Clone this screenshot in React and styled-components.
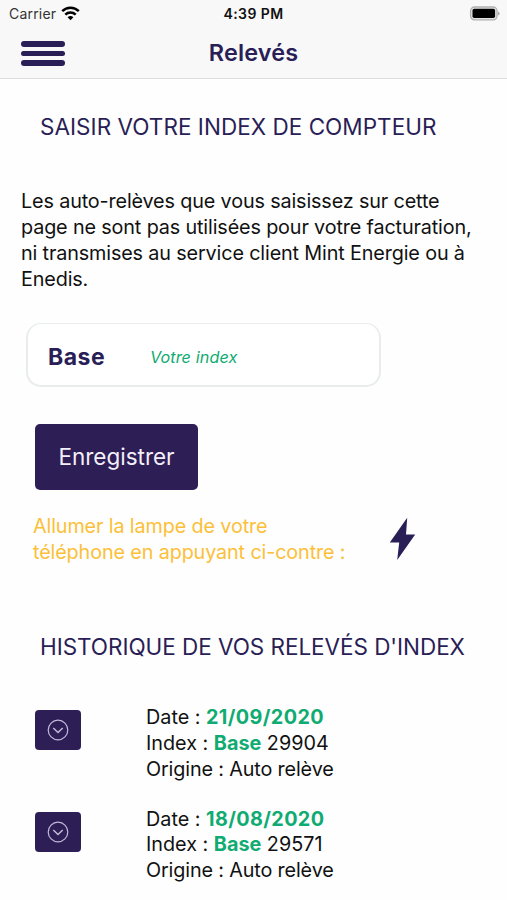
import React from 'react'
import styled, { createGlobalStyle } from 'styled-components'

const GlobalStyle = createGlobalStyle`
    * {
        box-sizing: border-box;
    }

    body {
        margin: 0;
        background: #fefefe;
        color: #111;
        font-family: Inter, "Liberation Sans", sans-serif;
    }
`

const Screen = styled.div`
    width: 507px;
    height: 900px;
    overflow: hidden;
`

const Header = styled.header`
    height: 79px;
    background: #f8f8f8;
    border-bottom: 1px solid #dcdcdc;
`

const StatusBar = styled.div`
    height: 27px;
    padding: 0 7px 0 9px;
    display: grid;
    grid-template-columns: 1fr auto 1fr;
    align-items: center;
    font-size: 14px;
    line-height: 27px;
`

const Carrier = styled.div`
    display: flex;
    align-items: center;
    gap: 5px;
    letter-spacing: 0.2px;
    color: #333;
`

const Clock = styled.div`
    margin-right: 2px;
    font-weight: 600;
    letter-spacing: 0.4px;
    color: #111;
`

const Battery = styled.svg`
    justify-self: end;
`

const NavBar = styled.div`
    height: 51px;
    padding: 0 21px;
    display: grid;
    grid-template-columns: 1fr auto 1fr;
    align-items: center;
`

const MenuButton = styled.button`
    width: 44px;
    margin-top: 2px;
    padding: 0;
    border: 0;
    background: none;
    display: flex;
    flex-direction: column;
    gap: 4px;
`

const MenuBar = styled.span`
    height: 5.7px;
    border-radius: 3px;
    background: #2a1e57;
`

const PageTitle = styled.h1`
    margin: 0;
    font-size: 23.4px;
    font-weight: 600;
    line-height: 50px;
    letter-spacing: 0.15px;
    color: #2a1e57;
`

const SectionTitle = styled.h2`
    margin: 0 0 0 40px;
    font-size: 22.5px;
    font-weight: 400;
    line-height: 30px;
    letter-spacing: ${(props) => props.$spacing}px;
    color: #2a1e57;
    white-space: nowrap;
`

const Entry = styled.section`
    padding-top: 33px;
`

const Notice = styled.p`
    margin: 47.4px 0 0 21px;
    font-size: 19.8px;
    line-height: 25.7px;
    letter-spacing: -0.14px;
    white-space: nowrap;
`

const IndexField = styled.label`
    width: 355px;
    height: 64px;
    margin: 30.6px 0 0 26px;
    padding: 6px 0 0 20px;
    display: flex;
    align-items: center;
    border: 2px solid #e8eced;
    border-top-width: 1px;
    border-radius: 15px;
    background: #fff;
`

const FieldName = styled.span`
    width: 102px;
    font-size: 23px;
    font-weight: 700;
    letter-spacing: 0.5px;
    color: #2a1e57;
`

const FieldInput = styled.input`
    width: 200px;
    padding: 0;
    border: 0;
    outline: 0;
    background: none;
    font-family: inherit;
    font-size: 16.2px;
    font-style: italic;
    letter-spacing: 0.1px;

    &::placeholder {
        color: #10ab72;
        opacity: 1;
    }
`

const SaveButton = styled.button`
    display: block;
    width: 163px;
    height: 66px;
    margin: 37px 0 0 35px;
    padding: 0;
    border: 0;
    border-radius: 5px;
    background: #2d1f55;
    color: #f3effa;
    font-family: inherit;
    font-size: 22.5px;
`

const Torch = styled.div`
    margin: 24px 0 0 33px;
    display: flex;
    align-items: flex-start;
`

const TorchText = styled.p`
    width: 356px;
    margin: 0;
    font-size: 19.8px;
    line-height: 25.7px;
    letter-spacing: -0.13px;
    white-space: nowrap;
    color: #fcc038;
`

const Bolt = styled.svg`
    margin-top: 3px;
`

const History = styled.section`
    padding-top: 67px;
`

const Rows = styled.div`
    margin: 43px 0 0 35px;
    display: flex;
    flex-direction: column;
    gap: 24.2px;
`

const Row = styled.div`
    display: flex;
    align-items: flex-start;
`

const ExpandButton = styled.button`
    width: 46px;
    height: 40px;
    margin: 5px 65px 0 0;
    padding: 0;
    border: 0;
    border-radius: 4px;
    background: #2d1f55;
    display: flex;
    align-items: center;
    justify-content: center;
`

const Details = styled.div`
    font-size: 19.8px;
    line-height: 25.7px;
    white-space: nowrap;
`

const Origin = styled.div`
    letter-spacing: -0.14px;
`

const Value = styled.b`
    font-weight: 700;
    letter-spacing: ${(props) => props.$spacing || 0}px;
    color: #10ab72;
`

const releves = [
    { date: '21/09/2020', index: '29904', origine: 'Auto relève' },
    { date: '18/08/2020', index: '29571', origine: 'Auto relève' },
]

function App() {
    return (
        <Screen>
            <GlobalStyle />
            <Header>
                <StatusBar>
                    <Carrier>
                        Carrier
                        <svg width="19" height="15" viewBox="0 0 19 15" fill="none" stroke="#000" strokeWidth="2.5">
                            <path d="M1.2 5.2C5.9.5 13.1.5 17.8 5.2" />
                            <path d="M4.3 8.6c2.9-2.8 7.5-2.8 10.4 0" />
                            <path d="M9.5 14.2 6.6 11.2c1.7-1.5 4.1-1.5 5.8 0z" fill="#000" stroke="none" />
                        </svg>
                    </Carrier>
                    <Clock>4:39 PM</Clock>
                    <Battery width="31" height="15" viewBox="0 0 31 15">
                        <rect x="1.6" y="1" width="26.4" height="12.8" rx="3.8" fill="#e4e4e4" stroke="#b0b0b0" strokeWidth="1.3" />
                        <rect x="3.5" y="2.8" width="22.6" height="9.2" rx="1.8" fill="#000" />
                        <path d="M28.8 5.2c2.4.8 2.4 3.7 0 4.5z" fill="#aaa" />
                    </Battery>
                </StatusBar>
                <NavBar>
                    <MenuButton aria-label="Menu">
                        <MenuBar />
                        <MenuBar />
                        <MenuBar />
                    </MenuButton>
                    <PageTitle>Relevés</PageTitle>
                </NavBar>
            </Header>

            <Entry>
                <SectionTitle $spacing={0.03}>SAISIR VOTRE INDEX DE COMPTEUR</SectionTitle>
                <Notice>
                    Les auto-relèves que vous saisissez sur cette<br />
                    page ne sont pas utilisées pour votre facturation,<br />
                    ni transmises au service client Mint Energie ou à<br />
                    Enedis.
                </Notice>
                <IndexField>
                    <FieldName>Base</FieldName>
                    <FieldInput type="text" placeholder="Votre index" />
                </IndexField>
                <SaveButton>Enregistrer</SaveButton>
                <Torch>
                    <TorchText>
                        Allumer la lampe de votre<br />
                        téléphone en appuyant ci-contre :
                    </TorchText>
                    <Bolt width="27" height="44" viewBox="0 0 27 44">
                        <path d="M18.2.8 17 17.4H26.2L8.2 43 10.2 25.6H.8z" fill="#2a1e57" />
                    </Bolt>
                </Torch>
            </Entry>

            <History>
                <SectionTitle $spacing={-0.05}>HISTORIQUE DE VOS RELEVÉS D'INDEX</SectionTitle>
                <Rows>
                    { releves.map((item) =>
                        <Row key={item.date}>
                            <ExpandButton aria-label="Détails">
                                <svg width="22" height="22" viewBox="0 0 22 22" fill="none" stroke="#c3b9da" strokeWidth="1.2">
                                    <circle cx="11" cy="11" r="9.8" />
                                    <path d="M6.3 9l4.7 4.5L15.7 9" strokeWidth="1.5" />
                                </svg>
                            </ExpandButton>
                            <Details>
                                <div>Date : <Value $spacing={0.38}>{item.date}</Value></div>
                                <div>Index : <Value>Base</Value> {item.index}</div>
                                <Origin>Origine : {item.origine}</Origin>
                            </Details>
                        </Row>
                    ) }
                </Rows>
            </History>
        </Screen>
    )
}

export default App
